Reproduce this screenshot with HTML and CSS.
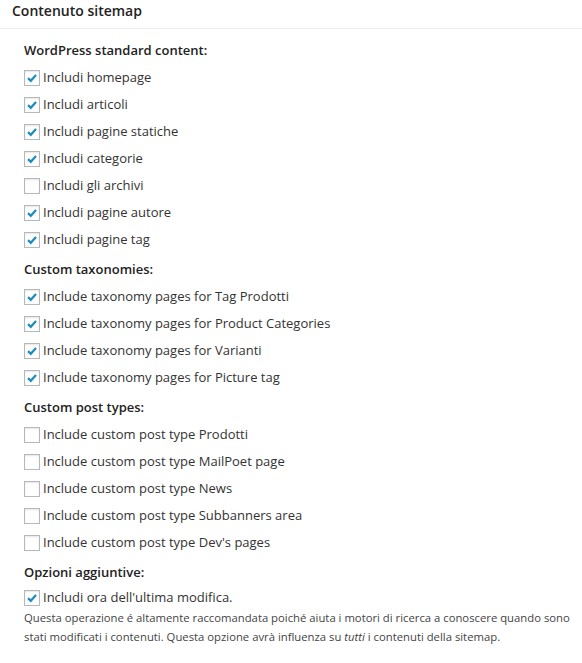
FILE: index.html
```html
<!DOCTYPE html>
<html lang="it">
<head>
  <meta charset="UTF-8" />
  <title>Contenuto sitemap</title>
  <link rel="stylesheet" href="styles.css">
</head>
<body>

<div class="postbox">
  <h3 class="hndle">Contenuto sitemap</h3>
  <div class="inside">

    <p class="group-title">WordPress standard content:</p>
    <label class="row"><span class="cb on"><svg viewBox="0 0 16 16"><path d="M3.5 8.2 L6.6 11.2 L12.6 4.6"/></svg></span>Includi homepage</label>
    <label class="row"><span class="cb on"><svg viewBox="0 0 16 16"><path d="M3.5 8.2 L6.6 11.2 L12.6 4.6"/></svg></span>Includi articoli</label>
    <label class="row"><span class="cb on"><svg viewBox="0 0 16 16"><path d="M3.5 8.2 L6.6 11.2 L12.6 4.6"/></svg></span>Includi pagine statiche</label>
    <label class="row"><span class="cb on"><svg viewBox="0 0 16 16"><path d="M3.5 8.2 L6.6 11.2 L12.6 4.6"/></svg></span>Includi categorie</label>
    <label class="row"><span class="cb"></span>Includi gli archivi</label>
    <label class="row"><span class="cb on"><svg viewBox="0 0 16 16"><path d="M3.5 8.2 L6.6 11.2 L12.6 4.6"/></svg></span>Includi pagine autore</label>
    <label class="row"><span class="cb on"><svg viewBox="0 0 16 16"><path d="M3.5 8.2 L6.6 11.2 L12.6 4.6"/></svg></span>Includi pagine tag</label>

    <p class="group-title">Custom taxonomies:</p>
    <label class="row"><span class="cb on"><svg viewBox="0 0 16 16"><path d="M3.5 8.2 L6.6 11.2 L12.6 4.6"/></svg></span>Include taxonomy pages for Tag Prodotti</label>
    <label class="row"><span class="cb on"><svg viewBox="0 0 16 16"><path d="M3.5 8.2 L6.6 11.2 L12.6 4.6"/></svg></span>Include taxonomy pages for Product Categories</label>
    <label class="row"><span class="cb on"><svg viewBox="0 0 16 16"><path d="M3.5 8.2 L6.6 11.2 L12.6 4.6"/></svg></span>Include taxonomy pages for Varianti</label>
    <label class="row"><span class="cb on"><svg viewBox="0 0 16 16"><path d="M3.5 8.2 L6.6 11.2 L12.6 4.6"/></svg></span>Include taxonomy pages for Picture tag</label>

    <p class="group-title">Custom post types:</p>
    <label class="row"><span class="cb"></span>Include custom post type Prodotti</label>
    <label class="row"><span class="cb"></span>Include custom post type MailPoet page</label>
    <label class="row"><span class="cb"></span>Include custom post type News</label>
    <label class="row"><span class="cb"></span>Include custom post type Subbanners area</label>
    <label class="row"><span class="cb"></span>Include custom post type Dev's pages</label>

    <p class="group-title">Opzioni aggiuntive:</p>
    <label class="row last"><span class="cb on"><svg viewBox="0 0 16 16"><path d="M3.5 8.2 L6.6 11.2 L12.6 4.6"/></svg></span>Includi ora dell'ultima modifica.</label>
    <p class="description">Questa operazione é altamente raccomandata poiché aiuta i motori di ricerca a conoscere quando sono stati modificati i contenuti. Questa opzione avrà influenza su <em>tutti</em> i contenuti della sitemap.</p>

  </div>
</div>

</body>
</html>
```

FILE: styles.css
```css
body {
  margin: 0;
  padding: 0;
  background: #fff;
  font-family: "Open Sans", "Liberation Sans", sans-serif;
  color: #444;
}

.postbox {
  background: #fff;
}

.hndle {
  margin: 0;
  padding: 1px 12px 7px;
  font-size: 14px;
  line-height: 20px;
  font-weight: 600;
  color: #222;
  border-bottom: 1px solid #eee;
}

.inside {
  padding: 6px 8px 0 24px;
}

.group-title {
  margin: 0;
  padding: 5px 0;
  font-size: 13px;
  line-height: 20px;
  font-weight: 600;
  color: #222;
}

.row {
  display: flex;
  align-items: flex-start;
  box-sizing: border-box;
  height: 27px;
  padding-top: 2px;
  font-size: 13px;
  line-height: 20px;
  color: #333;
}

.row.last {
  height: 21px;
  padding-top: 0;
}

.cb {
  width: 16px;
  height: 16px;
  box-sizing: border-box;
  margin: 3px 3px 0 0;
  border: 1px solid #b4b9be;
  background: #fff;
  box-shadow: inset 0 1px 2px rgba(0, 0, 0, 0.1);
  flex: none;
}

.cb svg {
  display: block;
  width: 14px;
  height: 14px;
}

.cb path {
  fill: none;
  stroke: #1e8cbe;
  stroke-width: 2.6;
}

.description {
  margin: 0;
  font-size: 11.3px;
  line-height: 19px;
  color: #444;
}
```
